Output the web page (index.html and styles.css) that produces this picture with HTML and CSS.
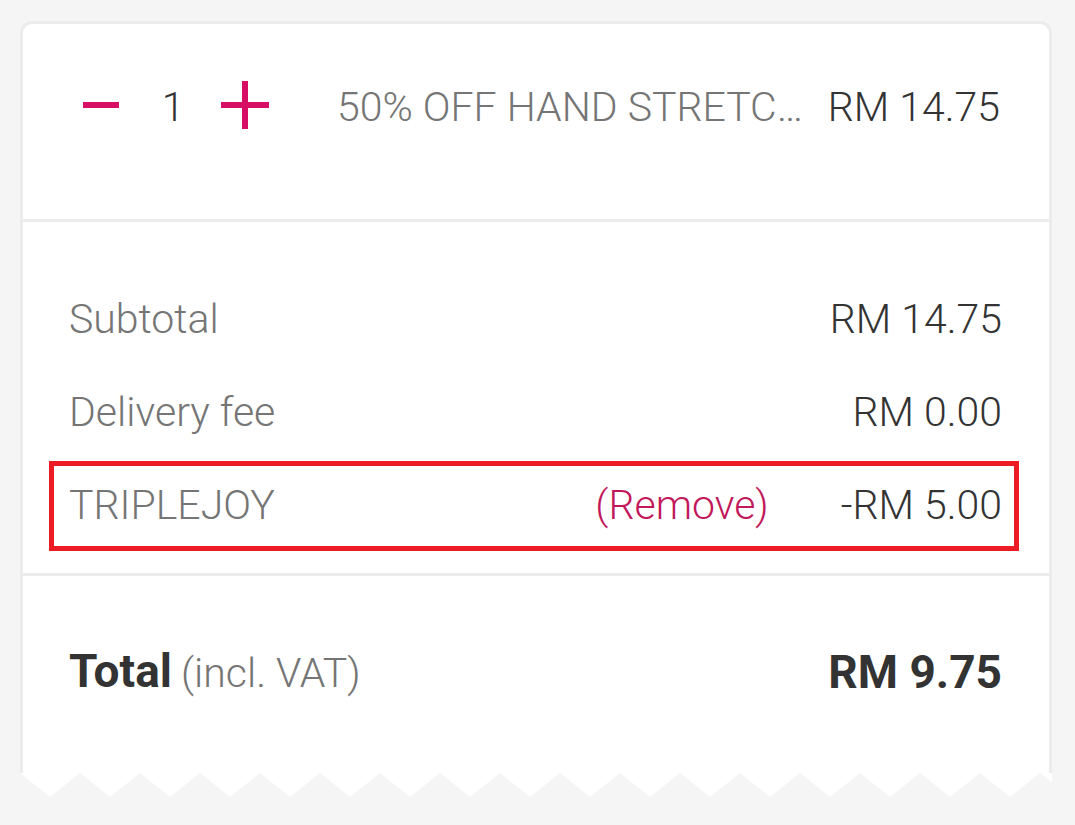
FILE: index.html
```html
<!DOCTYPE html>
<html lang="en">
<head>
<meta charset="utf-8">
<title>Cart summary</title>
<link rel="stylesheet" href="styles.css">
</head>
<body>
<div class="page">
  <div class="card">
    <section class="item-section">
      <div class="item-row">
        <button class="qty-btn" aria-label="Decrease">
          <svg width="48" height="48" viewBox="0 0 48 48"><rect x="6" y="21" width="36" height="6" fill="#d70f64"/></svg>
        </button>
        <span class="qty">1</span>
        <button class="qty-btn" aria-label="Increase">
          <svg width="48" height="48" viewBox="0 0 48 48"><rect x="0" y="21" width="48" height="6" fill="#d70f64"/><rect x="21" y="0" width="6" height="48" fill="#d70f64"/></svg>
        </button>
        <span class="item-name">50% OFF HAND STRETC…</span>
        <span class="item-price">RM 14.75</span>
      </div>
    </section>
    <section class="breakdown">
      <div class="line">
        <span class="label">Subtotal</span>
        <span class="value">RM 14.75</span>
      </div>
      <div class="line">
        <span class="label">Delivery fee</span>
        <span class="value">RM 0.00</span>
      </div>
      <div class="line line-coupon">
        <span class="label">TRIPLEJOY</span>
        <span class="remove">(Remove)</span>
        <span class="value coupon-value">-RM 5.00</span>
      </div>
    </section>
    <section class="total-section">
      <div class="line total-line">
        <span class="total-label"><strong>Total</strong><span class="vat">(incl. VAT)</span></span>
        <span class="total-value">RM 9.75</span>
      </div>
    </section>
  </div>
  <svg class="zigzag" width="1032" height="24" viewBox="0 0 1032 24">
    <defs>
      <pattern id="zz" width="60" height="24" patternUnits="userSpaceOnUse">
        <polygon points="0,0 60,0 30,24" fill="#ffffff"/>
      </pattern>
    </defs>
    <rect x="0" y="0" width="1032" height="24" fill="url(#zz)"/>
  </svg>
</div>
</body>
</html>
```

FILE: styles.css
```css
html, body {
  margin: 0;
  padding: 0;
  background: #f5f5f5;
}

body {
  font-family: "Roboto Light", Roboto, "Liberation Sans", sans-serif;
  font-weight: 300;
  color: #333333;
  height: 825px;
  overflow: hidden;
}

.page {
  padding: 21px 0 0 20px;
  width: 1032px;
}

.card {
  background: #ffffff;
  border: 3px solid #ececec;
  border-bottom: none;
  border-radius: 12px 12px 0 0;
  height: 752px;
  box-sizing: border-box;
  display: flex;
  flex-direction: column;
}

.zigzag {
  display: block;
}

.item-section {
  height: 198px;
  box-sizing: border-box;
  border-bottom: 3px solid #ececec;
  padding: 55px 49px 0 54px;
}

.item-row {
  display: flex;
  align-items: center;
  height: 56px;
}

.qty-btn {
  width: 48px;
  height: 48px;
  padding: 0;
  margin: 0;
  border: none;
  background: none;
  display: block;
  flex: none;
  margin-top: -4px;
}

.qty-btn svg {
  display: block;
}

.qty {
  width: 96px;
  text-align: center;
  font-size: 41px;
  color: #333333;
  flex: none;
}

.item-name {
  flex: 1;
  min-width: 0;
  margin-left: 68px;
  font-size: 41px;
  color: #757575;
  white-space: nowrap;
  overflow: hidden;
  text-overflow: ellipsis;
}

.item-price {
  flex: none;
  margin-left: 14px;
  font-size: 41px;
  color: #333333;
}

.breakdown {
  height: 354px;
  box-sizing: border-box;
  border-bottom: 3px solid #ececec;
  padding: 50px 47px 0 46px;
}

.line {
  display: flex;
  align-items: center;
  height: 93px;
  font-size: 41px;
  line-height: 48px;
}

.label {
  flex: 1;
  color: #757575;
}

.value {
  color: #333333;
}

.line-coupon {
  position: relative;
}

.line-coupon::after {
  content: "";
  position: absolute;
  top: 3px;
  bottom: 0;
  left: -20px;
  right: -17px;
  border: 5px solid #ed1c24;
  pointer-events: none;
}

.remove {
  color: #c2185b;
}

.coupon-value {
  margin-left: 72px;
}

.total-section {
  flex: 1;
  padding: 68px 47px 0 46px;
}

.total-line {
  height: 56px;
}

.total-label {
  flex: 1;
}

.total-label strong {
  font-family: Roboto, "Liberation Sans", sans-serif;
  font-weight: 700;
  font-size: 46px;
  color: #333333;
}

.vat {
  font-size: 41px;
  color: #757575;
  margin-left: 9px;
}

.total-value {
  font-family: Roboto, "Liberation Sans", sans-serif;
  font-weight: 700;
  font-size: 46px;
  color: #333333;
}
```
